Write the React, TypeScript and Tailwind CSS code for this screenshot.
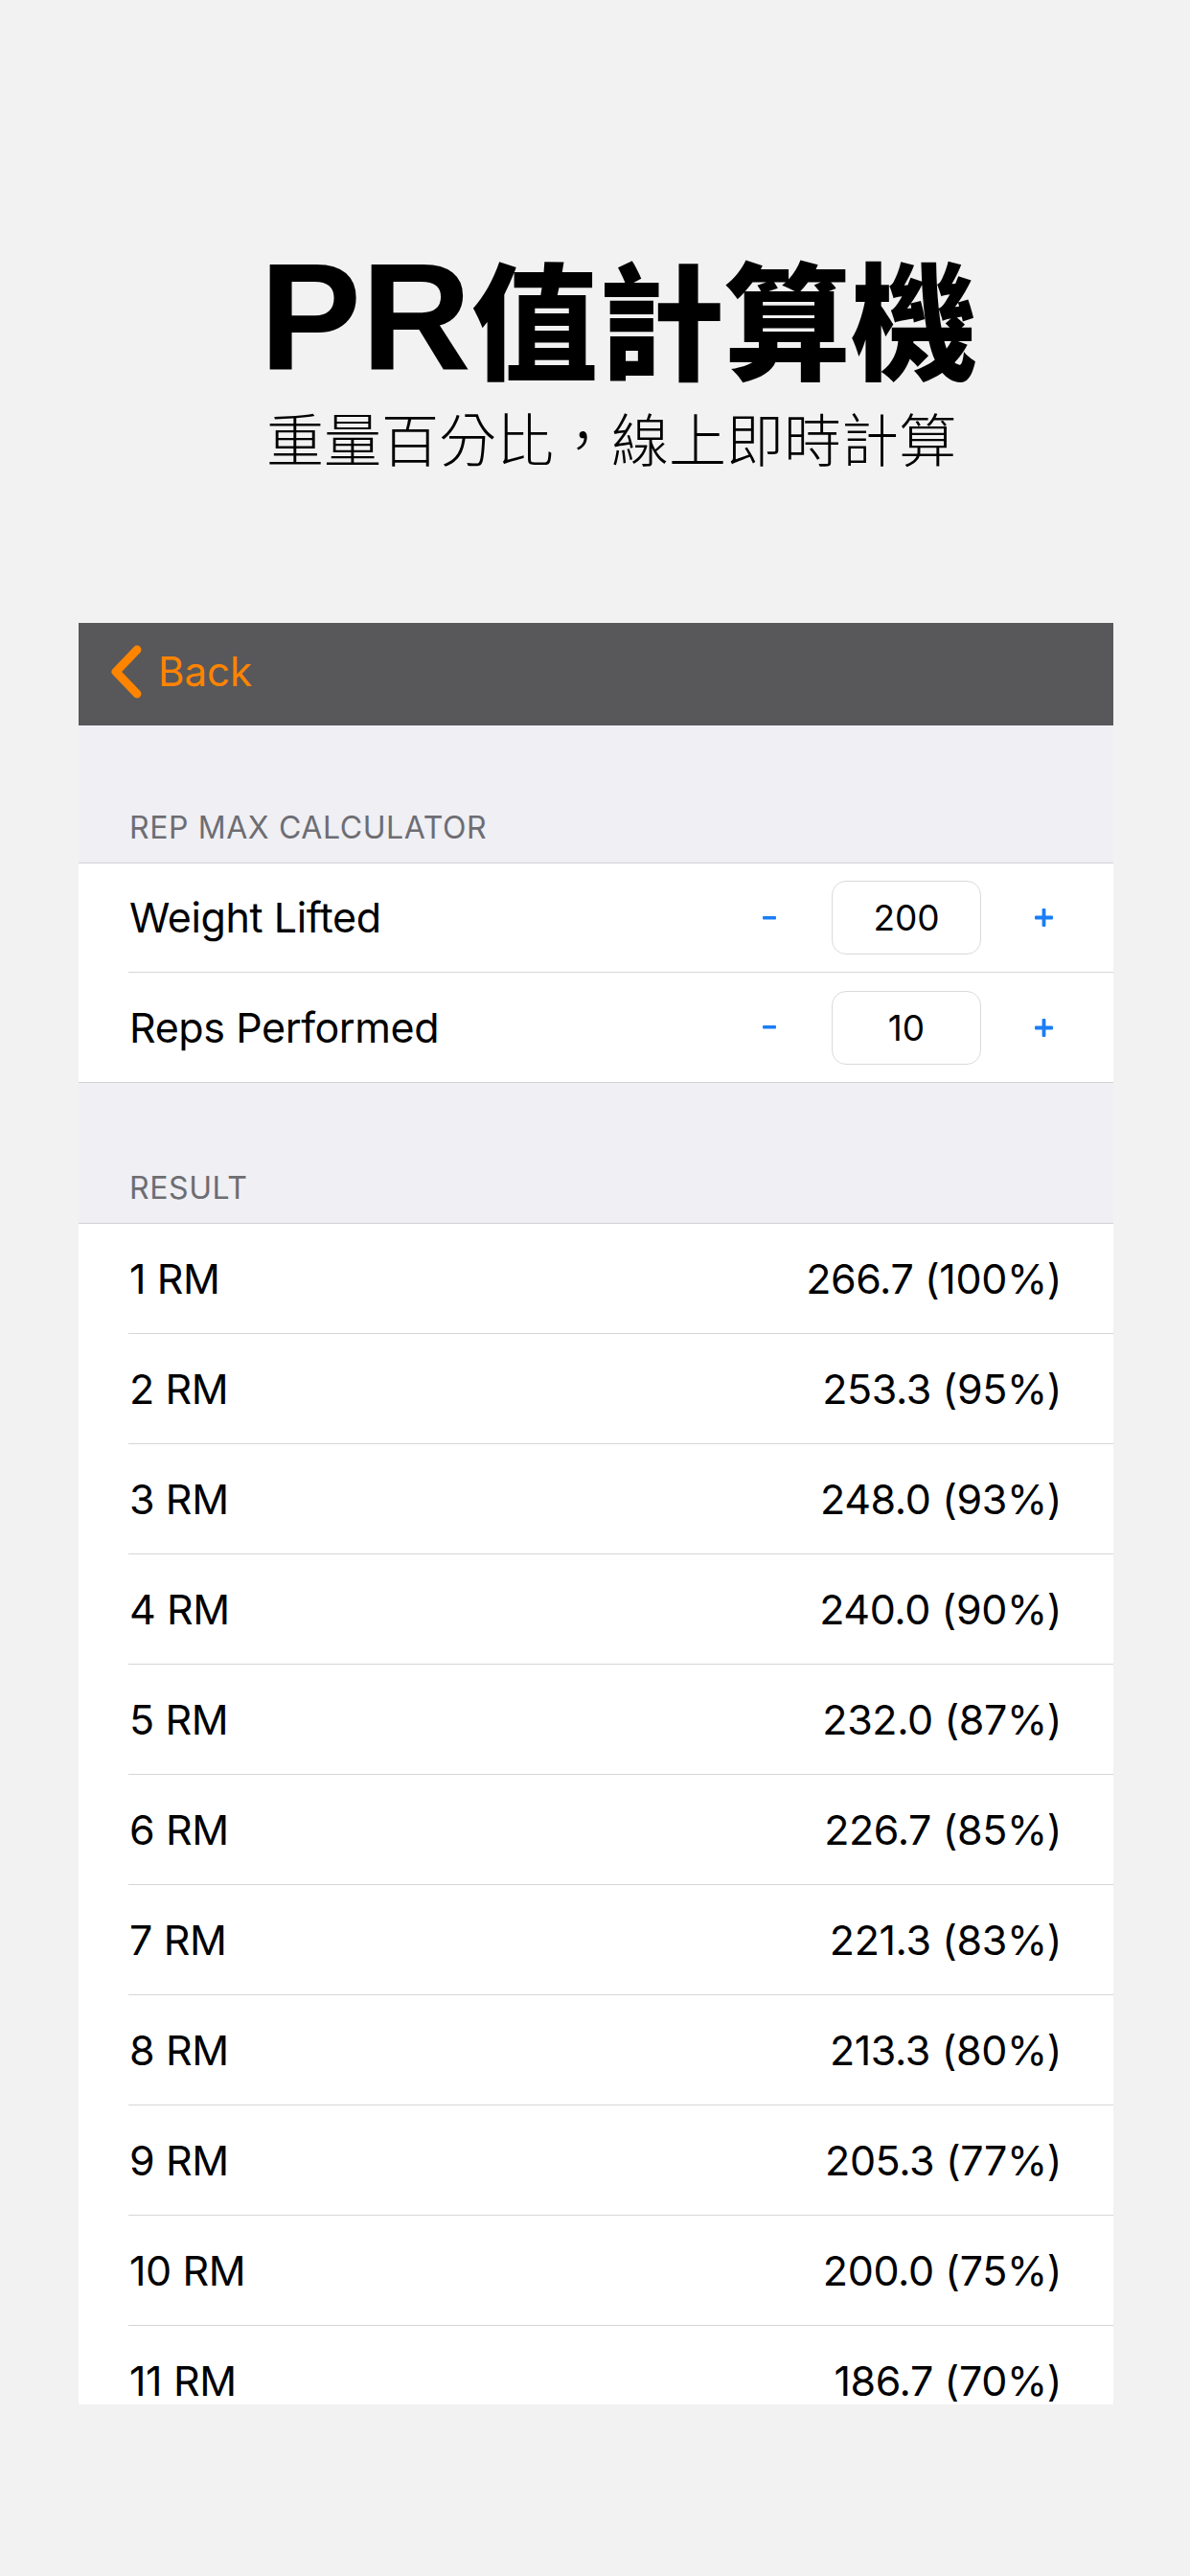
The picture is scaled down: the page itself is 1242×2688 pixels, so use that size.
import React from 'react';

const SANS = "font-['Inter','Noto_Sans_CJK_TC',sans-serif]";

const RESULTS: [number, string][] = [
  [1, '266.7 (100%)'],
  [2, '253.3 (95%)'],
  [3, '248.0 (93%)'],
  [4, '240.0 (90%)'],
  [5, '232.0 (87%)'],
  [6, '226.7 (85%)'],
  [7, '221.3 (83%)'],
  [8, '213.3 (80%)'],
  [9, '205.3 (77%)'],
  [10, '200.0 (75%)'],
  [11, '186.7 (70%)'],
];

function SectionHeader({ title, tall = false }: { title: string; tall?: boolean }) {
  return (
    <div
      className={`flex items-end bg-[#efeff4] border-b border-[#d1d1d6] pl-[53px] pb-[20px] ${
        tall ? 'h-[147px]' : 'h-[144px]'
      }`}
    >
      <span className="text-[32px] leading-none text-[#6d6d72] tracking-[0.6px]">{title}</span>
    </div>
  );
}

function Minus() {
  return (
    <svg width="14" height="4" viewBox="0 0 14 4" aria-hidden>
      <rect x="0" y="0" width="14" height="3.5" rx="1" fill="#1a7ef5" />
    </svg>
  );
}

function Plus() {
  return (
    <svg width="19" height="19" viewBox="0 0 19 19" aria-hidden>
      <rect x="7.6" y="0" width="3.8" height="19" rx="1" fill="#1a7ef5" />
      <rect x="0" y="7.6" width="19" height="3.8" rx="1" fill="#1a7ef5" />
    </svg>
  );
}

function Stepper({ label, value, last = false }: { label: string; value: string; last?: boolean }) {
  return (
    <div className="pl-[52px]">
      <div className={`flex h-[114px] items-center pl-[1px] ${last ? '' : 'border-b border-[#d6d6da]'}`}>
        <span className="flex-1 text-[43px] leading-none text-black tracking-[-0.4px]">{label}</span>
        <div className="flex w-[40px] items-center justify-center">
          <Minus />
        </div>
        <div className="ml-[45px] flex h-[77px] w-[156px] items-center justify-center rounded-[15px] border-[1.5px] border-[#dadadc] text-[37px] leading-none text-black">
          {value}
        </div>
        <div className="ml-[45px] flex w-[40px] items-center justify-center">
          <Plus />
        </div>
        <div className="w-[53px]" />
      </div>
    </div>
  );
}

function ResultRow({ reps, value }: { reps: number; value: string }) {
  return (
    <div className="pl-[52px]">
      <div className="flex h-[115px] items-center justify-between border-b border-[#d6d6da] pl-[1px] pr-[54px]">
        <span className="text-[43px] leading-none text-black tracking-[-0.4px]">{reps} RM</span>
        <span className="text-[43px] leading-none text-black tracking-[-0.4px]">{value}</span>
      </div>
    </div>
  );
}

export default function App() {
  return (
    <div className={`min-h-[2688px] bg-[#f2f2f2] ${SANS}`}>
      {/* hero */}
      <div className="flex flex-col items-center pt-[252px]">
        <h1 className="flex items-baseline pl-[49px] text-black">
          <span className="font-['Liberation_Sans',sans-serif] text-[159px] font-bold leading-none">PR</span>
          <span className="font-['Noto_Sans_CJK_TC',sans-serif] text-[132px] font-black leading-none">
            值計算機
          </span>
        </h1>
        <p className="mt-[15px] pl-[34px] font-['Noto_Sans_CJK_TC',sans-serif] text-[60px] font-light leading-none text-black">
          重量百分比，線上即時計算
        </p>
      </div>

      {/* phone screen, cut off mid-row like the screenshot */}
      <div className="ml-[82px] mr-[80px] mt-[164px] h-[1859px] overflow-hidden bg-white">
        <div className="flex h-[107px] items-center bg-[#58585a] pb-[6px] pl-[33px]">
          <svg width="34" height="56" viewBox="0 0 34 56" aria-hidden>
            <path
              d="M28 5 L6 28 L28 51"
              fill="none"
              stroke="#ff8400"
              strokeWidth="9"
              strokeLinecap="round"
              strokeLinejoin="round"
            />
          </svg>
          <span className="ml-[16px] text-[42px] leading-none text-[#ff8400]">Back</span>
        </div>

        <SectionHeader title="REP MAX CALCULATOR" />
        <Stepper label="Weight Lifted" value="200" />
        <div className="border-b border-[#d1d1d6]">
          <Stepper label="Reps Performed" value="10" last />
        </div>

        <SectionHeader title="RESULT" tall />
        {RESULTS.map(([reps, value]) => (
          <ResultRow key={reps} reps={reps} value={value} />
        ))}
      </div>
    </div>
  );
}
